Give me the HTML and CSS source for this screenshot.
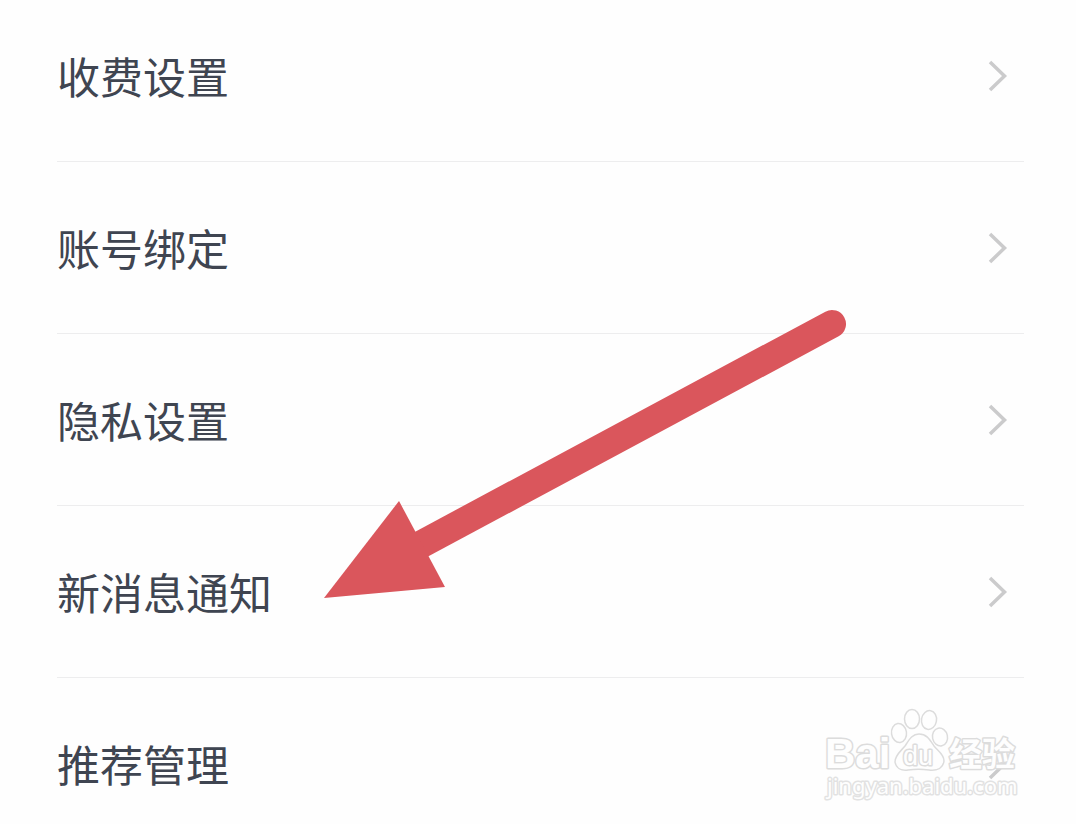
FILE: index.html
```html
<!DOCTYPE html>
<html lang="zh-CN">
<head>
<meta charset="utf-8">
<meta name="viewport" content="width=device-width, initial-scale=1">
<title>设置</title>
<link rel="stylesheet" href="styles.css">
</head>
<body>
<main class="screen">
  <nav class="settings">
    <a class="row" href="#fees"><span class="label">收费设置</span><svg class="chevron" viewBox="0 0 20 34" aria-hidden="true"><path d="M2 3 16.500 17 2 31"/></svg></a>
    <a class="row" href="#account"><span class="label">账号绑定</span><svg class="chevron" viewBox="0 0 20 34" aria-hidden="true"><path d="M2 3 16.500 17 2 31"/></svg></a>
    <a class="row" href="#privacy"><span class="label">隐私设置</span><svg class="chevron" viewBox="0 0 20 34" aria-hidden="true"><path d="M2 3 16.500 17 2 31"/></svg></a>
    <a class="row" href="#messages"><span class="label">新消息通知</span><svg class="chevron" viewBox="0 0 20 34" aria-hidden="true"><path d="M2 3 16.500 17 2 31"/></svg></a>
    <a class="row" href="#recommend"><span class="label">推荐管理</span><svg class="chevron" viewBox="0 0 20 34" aria-hidden="true"><path d="M2 3 16.500 17 2 31"/></svg></a>
  </nav>
  <svg class="arrow" viewBox="0 0 540 300" aria-hidden="true">
    <path class="arrow-line" d="M100 245 512 24"/>
    <path class="arrow-head" d="M4 298 79 201 125 287Z"/>
  </svg>
  <svg class="watermark" viewBox="0 0 204 100" role="img" aria-label="Baidu 经验">
    <text class="mark brand" x="5" y="64">Bai</text>
    <g class="paw">
      <ellipse cx="79" cy="29" rx="7.500" ry="9.500" transform="rotate(-8 79 29)"/>
      <ellipse cx="92" cy="15" rx="7.500" ry="9.500"/>
      <ellipse cx="109" cy="16" rx="7.500" ry="9.500" transform="rotate(10 109 16)"/>
      <ellipse cx="120" cy="33" rx="7.500" ry="9" transform="rotate(-12 120 33)"/>
      <path d="M99 30C92 30 89 36 85 42C81 47 75 51 75 58C76 64 81 67 88 66C95 65 102 65 109 66C117 67 123 64 124 57C124 50 118 47 114 42C110 36 107 30 99 30Z"/>
    </g>
    <text class="mark du" x="83" y="61">du</text>
    <text class="mark cn" x="129" y="62">经验</text>
    <text class="mark site" x="7" y="90">jingyan.baidu.com</text>
  </svg>
</main>
</body>
</html>
```
FILE: styles.css
```css
body {
  margin: 0;
  overflow: hidden;
  background: #fefefe;
  color: #3f4551;
  font-family: "Noto Sans CJK SC", sans-serif;
}

.screen {
  display: flow-root;
  position: relative;
  min-height: 100vh;
}

.settings {
  margin-top: -10px;
  padding: 0 52px 0 57px;
}

.row {
  display: flex;
  align-items: center;
  justify-content: space-between;
  box-sizing: border-box;
  min-height: 172px;
  padding-right: 16px;
  border-bottom: 1px solid #ededee;
  color: inherit;
  font-size: 43px;
  line-height: 64px;
  text-decoration: none;
}

.label {
  padding-bottom: 2px;
}

.chevron {
  width: 20px;
  height: 34px;
  fill: none;
  stroke: #cbcbcc;
  stroke-width: 3.5;
}

.arrow {
  position: absolute;
  top: 300px;
  left: 320px;
  width: 540px;
  height: 300px;
  pointer-events: none;
}

.arrow-line {
  fill: none;
  stroke: #da565c;
  stroke-width: 28;
  stroke-linecap: round;
}

.arrow-head {
  fill: #da565c;
}

.watermark {
  position: absolute;
  top: 704px;
  right: 52px;
  width: 204px;
  height: 100px;
  pointer-events: none;
}

.mark {
  fill: #fefefe;
  stroke: #dcdcdc;
  stroke-width: 3;
  stroke-linejoin: round;
  paint-order: stroke;
}

.paw {
  fill: #fefefe;
  stroke: #dcdcdc;
  stroke-width: 1.5;
}

.brand {
  font: bold 42px "Liberation Sans", sans-serif;
}

.du {
  font: 27px "Liberation Sans", sans-serif;
}

.cn {
  font: bold 33px "Noto Sans CJK SC", sans-serif;
}

.site {
  font: 22px "Noto Sans", sans-serif;
  stroke: #e2e2e2;
}
```
